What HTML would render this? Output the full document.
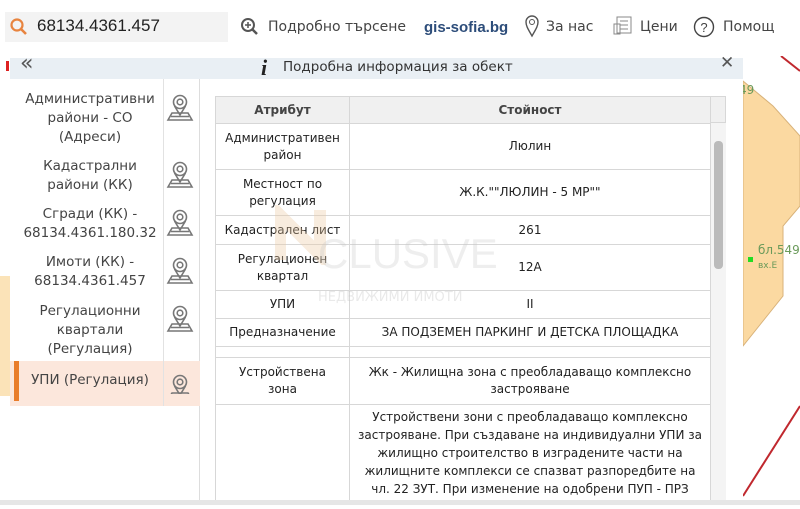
<!DOCTYPE html>
<html><head><meta charset="utf-8"><style>
*{box-sizing:border-box;margin:0;padding:0}
body{width:800px;height:505px;overflow:hidden;background:#fff;font-family:"DejaVu Sans","Liberation Sans",sans-serif;color:#333;position:relative}
.abs{position:absolute}
.top{left:0;top:0;width:800px;height:56px;background:#fff}
.search{left:5px;top:12px;width:223px;height:30px;background:#f3f3f3}
.nav{top:19px;font-size:14px;color:#444}
.map{left:743px;top:56px;width:57px;height:449px;background:#fff}
.hdr{left:10px;top:58px;width:733px;height:21px;background:#e9eff4}
.list{left:10px;top:79px;width:190px;height:421px;background:#fff;border-right:1px solid #ddd}
.item{position:absolute;left:0;width:190px;font-size:13.5px;line-height:19px;text-align:center;color:#444}
.item .t{position:absolute;left:6px;width:148px;}
table{border-collapse:collapse;font-size:12px;color:#222}
td,th{border:1px solid #d7d7d7;text-align:center;padding:0 4px;line-height:17px}
th{background:#f0f0f0;font-weight:bold;color:#444;height:27px}
</style></head><body>
<div class="abs top"></div>
<div class="abs search"></div>
<svg class="abs" style="left:9px;top:17px" width="20" height="20"><circle cx="8" cy="8" r="5.5" fill="none" stroke="#e8843f" stroke-width="2.2"/><line x1="12" y1="12" x2="17" y2="17" stroke="#e8843f" stroke-width="2.6"/></svg>
<div class="abs" style="left:37px;top:16px;font-size:17px;color:#222;font-family:'Liberation Sans',sans-serif">68134.4361.457</div>
<svg class="abs" style="left:240px;top:17px" width="20" height="20"><circle cx="8" cy="8" r="6" fill="none" stroke="#555" stroke-width="2"/><line x1="12.5" y1="12.5" x2="17" y2="17" stroke="#555" stroke-width="2.5"/><path d="M5 8h6M8 5v6" stroke="#555" stroke-width="1.5"/></svg>
<div class="abs nav" style="left:268px">Подробно търсене</div>
<div class="abs nav" style="left:424px;font-weight:bold;color:#2d4d7a;font-family:'Liberation Sans',sans-serif;font-size:15px;top:19px">gis-sofia.bg</div>
<svg class="abs" style="left:524px;top:14px" width="16" height="24"><path d="M8 22C4 15 2 12 2 8a6 6 0 0 1 12 0c0 4-2 7-6 14z" fill="none" stroke="#555" stroke-width="1.4"/><circle cx="8" cy="8" r="2.5" fill="none" stroke="#555"/></svg>
<div class="abs nav" style="left:546px">За нас</div>
<svg class="abs" style="left:613px;top:16px" width="20" height="20"><rect x="4" y="1" width="14" height="16" fill="none" stroke="#888"/><rect x="1" y="8" width="6" height="10" fill="none" stroke="#888"/><path d="M7 5h8M7 9h8M7 13h8" stroke="#888"/></svg>
<div class="abs nav" style="left:640px">Цени</div>
<svg class="abs" style="left:693px;top:16px" width="22" height="22"><circle cx="11" cy="11" r="9.5" fill="none" stroke="#444" stroke-width="1.4"/><text x="11" y="16" font-size="13" text-anchor="middle" fill="#444" font-family="Liberation Sans">?</text></svg>
<div class="abs nav" style="left:723px">Помощ</div>

<div class="abs map">
<svg width="57" height="449"><polygon points="0,25 30,50 57,80 57,150 40,170 40,240 0,290" fill="#fbd9a1" stroke="#d8b27a"/><text x="-4" y="38" font-size="12" fill="#6a9a5a">49</text><text x="15" y="198" font-size="12" fill="#6a9a5a">бл.549</text><text x="15" y="212" font-size="9" fill="#6a9a5a">вх.Е</text><rect x="5" y="201" width="5" height="5" fill="#2d2"/><line x1="38" y1="0" x2="57" y2="15" stroke="#c0282e" stroke-width="2"/><line x1="0" y1="440" x2="57" y2="350" stroke="#c0282e" stroke-width="2"/></svg>
</div>
<div class="abs" style="left:0;top:56px;width:10px;height:449px;background:#fff"><div style="position:absolute;left:6px;top:5px;width:3px;height:10px;background:#d22"></div><div style="position:absolute;left:0;top:220px;width:10px;height:120px;background:#fbe3b8"></div></div>

<div class="abs hdr"></div>
<div class="abs" style="left:20px;top:51px;font-size:22px;color:#555">«</div>
<div class="abs" style="left:261px;top:55px;font-size:22px;font-weight:bold;font-family:'Liberation Serif',serif;font-style:italic;color:#222">i</div>
<div class="abs" style="left:283px;top:59px;font-size:13.5px;color:#333">Подробна информация за обект</div>
<div class="abs" style="left:720px;top:53px;font-size:17px;color:#555;font-weight:bold">✕</div>

<div class="abs list">
<div class="item" style="top:0;height:68px"><div class="t" style="top:11px">Административни<br>райони - СО<br>(Адреси)</div></div>
<div class="item" style="top:68px;height:48px"><div class="t" style="top:10px">Кадастрални<br>райони (КК)</div></div>
<div class="item" style="top:116px;height:48px"><div class="t" style="top:10px">Сгради (КК) -<br>68134.4361.180.32</div></div>
<div class="item" style="top:164px;height:48px"><div class="t" style="top:10px">Имоти (КК) -<br>68134.4361.457</div></div>
<div class="item" style="top:212px;height:70px"><div class="t" style="top:11px">Регулационни<br>квартали<br>(Регулация)</div></div>
<div class="item" style="top:282px;height:45px;background:#fce7dc"><div style="position:absolute;left:4px;top:0;width:5px;height:40px;background:#e97d2c"></div><div class="t" style="top:10px">УПИ (Регулация)</div></div>
</div>
<div class="abs" style="left:163px;top:79px;width:1px;height:327px;background:#e2e2e2"></div>
<svg class="abs" style="left:166px;top:94px" width="28" height="300">
<g id="p" fill="none" stroke="#777" stroke-width="1.6"><circle cx="14" cy="8" r="6.5"/><circle cx="14" cy="8" r="2.8"/><path d="M8.5 12l5.5 9 5.5-9M2 26l4-7h16l4 7zM5 22.5h18"/></g>
<use href="#p" y="67"/><use href="#p" y="115"/><use href="#p" y="163"/><use href="#p" y="211"/><use href="#p" y="280"/>
</svg>

<div class="abs" style="left:200px;top:79px;width:543px;height:421px;background:#fff"></div>
<div class="abs" style="left:215px;top:96px;width:511px;height:404px;overflow:hidden">
<table style="width:496px">
<tr><th style="width:134px">Атрибут</th><th>Стойност</th></tr>
<tr style="height:46px"><td>Административен<br>район</td><td>Люлин</td></tr>
<tr style="height:46px"><td>Местност по<br>регулация</td><td>Ж.К.""ЛЮЛИН - 5 МР""</td></tr>
<tr style="height:29px"><td>Кадастрален лист</td><td>261</td></tr>
<tr style="height:46px"><td>Регулационен<br>квартал</td><td>12А</td></tr>
<tr style="height:28px"><td>УПИ</td><td>II</td></tr>
<tr style="height:28px"><td>Предназначение</td><td>ЗА ПОДЗЕМЕН ПАРКИНГ И ДЕТСКА ПЛОЩАДКА</td></tr>
<tr style="height:11px"><td></td><td></td></tr>
<tr style="height:47px"><td>Устройствена<br>зона</td><td>Жк - Жилищна зона с преобладаващо комплексно<br>застрояване</td></tr>
<tr><td></td><td style="padding:3px 4px;line-height:18px">Устройствени зони с преобладаващо комплексно застрояване. При създаване на индивидуални УПИ за жилищно строителство в изградените части на жилищните комплекси се спазват разпоредбите на чл. 22 ЗУТ. При изменение на одобрени ПУП - ПРЗ</td></tr>
</table>
<div style="position:absolute;left:496px;top:0;width:15px;height:27px;background:#f0f0f0;border:1px solid #d7d7d7;border-left:none"></div>
<div style="position:absolute;left:496px;top:27px;width:15px;height:377px;background:#f4f4f4"><div style="position:absolute;left:3px;top:18px;width:9px;height:128px;background:#bbb;border-radius:4px"></div></div>
</div>
<svg class="abs" style="left:275px;top:205px" width="60" height="60"><path d="M5 55V10l40 40V5" fill="none" stroke="rgba(235,200,160,.35)" stroke-width="12"/></svg>
<div class="abs" style="left:318px;top:230px;font-size:42px;color:rgba(200,200,200,.3);font-family:'Liberation Sans',sans-serif">CLUSIVE</div>
<div class="abs" style="left:318px;top:290px;font-size:13px;color:rgba(200,200,200,.4)">НЕДВИЖИМИ ИМОТИ</div>
<div class="abs" style="left:0;top:500px;width:800px;height:5px;background:#e6e6e6"></div>
</body></html>
